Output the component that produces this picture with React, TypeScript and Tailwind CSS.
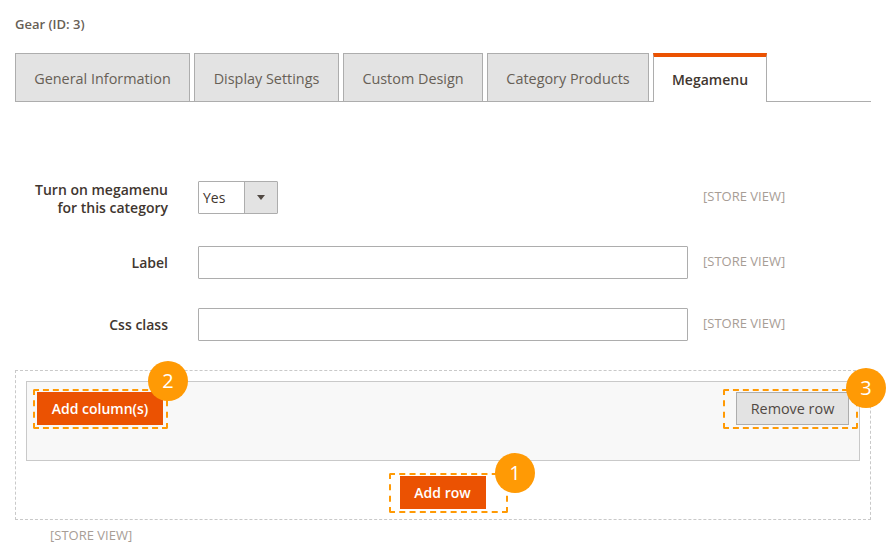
const tabs = [
  { label: "General Information", width: "w-[175px]" },
  { label: "Display Settings", width: "w-[145px]" },
  { label: "Custom Design", width: "w-[140px]" },
  { label: "Category Products", width: "w-[162px]" },
];

function StoreView() {
  return <span className="block text-[13px] leading-[18px] text-[#a79d95]">[STORE VIEW]</span>;
}

function Badge({ n, className }: { n: number; className: string }) {
  return (
    <span
      className={`absolute flex h-10 w-10 items-center justify-center rounded-full bg-[#ff9a05] text-[20px] text-white ${className}`}
    >
      {n}
    </span>
  );
}

function Callout({ className }: { className: string }) {
  return (
    <span className={`absolute rounded-[2px] border-2 border-dashed border-[#ff9a05] ${className}`} />
  );
}

export default function App() {
  return (
    <div className="h-[554px] w-[886px] overflow-hidden bg-white px-[15px] pt-[15px] font-['Open_Sans',sans-serif] text-[#41362f]">
      <h1 className="text-[13px] leading-[18px] font-semibold text-[#676056]">Gear (ID: 3)</h1>

      <div className="mt-5 flex h-[49px] w-[856px] gap-1 border-b border-[#adadad]">
        {tabs.map((tab) => (
          <div
            key={tab.label}
            className={`flex h-[49px] items-center justify-center border border-[#adadad] bg-[#e3e3e3] pt-[2px] text-[14.4px] text-[#676056] ${tab.width}`}
          >
            {tab.label}
          </div>
        ))}
        <div className="flex h-[49px] w-[114px] items-center justify-center border-x border-x-[#adadad] border-t-[4px] border-t-[#eb5202] bg-white text-[14px] font-semibold text-[#41362f]">
          Megamenu
        </div>
      </div>

      <div className="mt-[79px] flex h-[33px] items-center">
        <label className="w-[153px] pt-[2px] text-right text-[14px] leading-[18px] font-semibold">
          Turn on megamenu
          <br />
          for this category
        </label>
        <div className="ml-[30px] flex h-[33px] w-20 rounded-[1px] border border-[#adadad]">
          <span className="flex-1 pl-1 text-[14px] leading-[31px]">Yes</span>
          <span className="flex w-[33px] items-center justify-center border-l border-[#adadad] bg-[#e3e3e3]">
            <span className="h-0 w-0 border-x-[4px] border-t-[5px] border-x-transparent border-t-[#514943]" />
          </span>
        </div>
        <span className="mb-[4px] ml-[425px]">
          <StoreView />
        </span>
      </div>

      <div className="mt-8 flex h-[33px] items-center">
        <label className="w-[153px] text-right text-[14px] font-semibold">Label</label>
        <input className="ml-[30px] h-[33px] w-[490px] rounded-[1px] border border-[#adadad]" />
        <span className="mb-[4px] ml-[15px]">
          <StoreView />
        </span>
      </div>

      <div className="mt-[29px] flex h-[33px] items-center">
        <label className="w-[153px] text-right text-[14px] font-semibold">Css class</label>
        <input className="ml-[30px] h-[33px] w-[490px] rounded-[1px] border border-[#adadad]" />
        <span className="mb-[4px] ml-[15px]">
          <StoreView />
        </span>
      </div>

      <div className="relative mt-[29px] h-[150px] w-[856px] border border-dashed border-[#c9c9c9] px-[10px] pt-[10px]">
        <div className="flex h-20 items-start justify-between border border-[#c9c9c9] bg-[#f8f8f8] px-[10px] pt-[10px]">
          <button className="h-[33px] w-[126px] bg-[#eb5202] text-[14px] font-semibold text-white">
            Add column(s)
          </button>
          <button className="h-[33px] w-[113px] border border-[#adadad] bg-[#e3e3e3] text-[14.4px] text-[#514943]">
            Remove row
          </button>
        </div>
        <div className="mt-[15px] flex justify-center pr-[1px]">
          <button className="h-[33px] w-[86px] bg-[#eb5202] text-[14px] font-semibold text-white">
            Add row
          </button>
        </div>

        <Callout className="top-[18px] left-[17px] h-10 w-[135px]" />
        <Callout className="top-[18px] left-[707px] h-10 w-[135px]" />
        <Callout className="top-[102px] left-[373px] h-10 w-[119px]" />
        <Badge n={2} className="top-[-10px] left-[132px]" />
        <Badge n={3} className="top-[-3px] left-[830px]" />
        <Badge n={1} className="top-[82px] left-[479px]" />
      </div>

      <div className="mt-[6px] pl-[35px]">
        <StoreView />
      </div>
    </div>
  );
}
